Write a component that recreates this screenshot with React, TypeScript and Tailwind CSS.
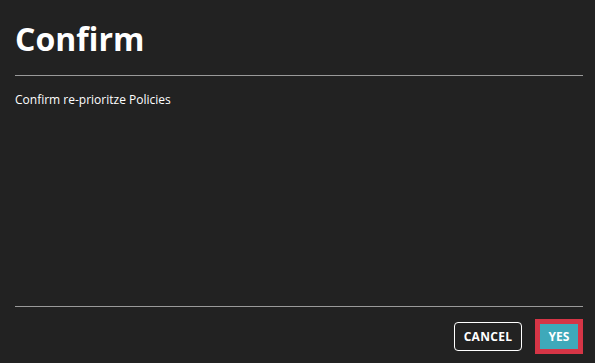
export default function App(): JSX.Element {
  return (
    <div
      className="flex h-[363px] w-[595px] flex-col bg-[#222222] text-white"
      style={{ fontFamily: '"Open Sans", "Noto Sans", sans-serif' }}
    >
      <div className="px-[15px] pt-[17px]">
        <h1 className="text-[32px] font-bold leading-[44px]">Confirm</h1>
      </div>
      <div className="ml-[15px] mr-[12px] mt-[14px] h-px bg-[#9a9a9a]" />
      <div className="flex-1 px-[15px] pt-[15px]">
        <p className="text-[12px] leading-[17px]">Confirm re-prioritze Policies</p>
      </div>
      <div className="ml-[15px] mr-[12px] h-px bg-[#9a9a9a]" />
      <div className="flex items-center justify-end gap-[13px] pb-[9px] pr-[12px] pt-[12px]">
        <button
          type="button"
          className="flex h-[29px] w-[68px] items-center justify-center rounded-[4px] border border-white text-[12px] font-bold tracking-[0.3px] text-white"
        >
          CANCEL
        </button>
        <div className="border-[5px] border-[#d63546]">
          <button
            type="button"
            className="flex h-[25px] w-[38px] items-center justify-center bg-[#3ea9ba] text-[12px] font-bold text-white"
          >
            YES
          </button>
        </div>
      </div>
    </div>
  );
}
